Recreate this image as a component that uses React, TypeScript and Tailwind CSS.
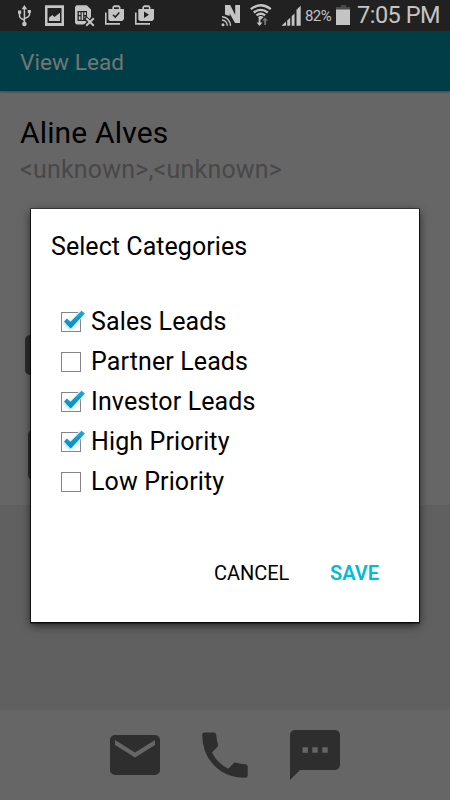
import React from "react";

const categories = [
  { name: "Sales Leads", checked: true },
  { name: "Partner Leads", checked: false },
  { name: "Investor Leads", checked: true },
  { name: "High Priority", checked: true },
  { name: "Low Priority", checked: false },
];

function StatusLeft() {
  return (
    <svg width="170" height="31" viewBox="0 0 170 31" fill="#c4c4c4">
      <g stroke="#c4c4c4" strokeWidth="1.5" fill="none">
        <path d="M24.4 8V23M19.5 13v3q0 2 5 4.200M29.500 12v2.500q0 2.200-5 4" />
      </g>
      <path d="M24.400 5l2.800 4.300h-5.600zM18 10.500h3.200v3.200H18zM27.700 10h3.200v3h-3.200z" />
      <circle cx="24.400" cy="24" r="2.300" />
      <path fillRule="evenodd" d="M45 5.200h19V26H45zM47.500 8v15h14V8z" />
      <path d="M49 21v-3.200l3.200-2.700 2.300 1.800 5.500-4.200V21z" />
      <path d="M76.500 5.300h10.200L91 9.500V17l-4 6-3 1.500h-7.500L75 23V7z" />
      <path d="M77.500 11h9.500v10h-9.500z" fill="#212121" />
      <path d="M78.800 12.300h1.700v2.600h-1.700zM81.600 12.300h1.600V20h-1.600zM84.300 12.300H86v2.600h-1.700zM78.800 16.300h1.700v3.500h-1.700zM84.300 16.500H86V20h-1.700z" />
      <path d="M85 17.500l9 9M94 17.500l-9 9" stroke="#212121" strokeWidth="4" />
      <path d="M86.200 18.200l7.600 7.600M93.800 18.200l-7.600 7.600" stroke="#c4c4c4" strokeWidth="2" />
      {[0, 30].map((x) => (
        <g key={x} transform={`translate(${x} 0)`}>
          <path d="M105 12.500h1.600V23H120v1.700h-15z" />
          <path fillRule="evenodd" d="M108.300 9h4V7l1.700-1.700h5L120.500 7v2h3.500v10l-1.700 2h-12.500l-1.500-1.500zM114 9h4.800V7.200H114z" />
        </g>
      ))}
      <path d="M113 14.800l2.300 2.300 4-4.500" fill="none" stroke="#212121" strokeWidth="1.500" />
      <path d="M144 11.500v6.400l5-3.200z" fill="#212121" />
    </svg>
  );
}

function StatusSignals() {
  return (
    <svg width="82" height="31" viewBox="221 0 82 31" className="shrink-0" fill="#c4c4c4">
      <path d="M225 5h5.200l5 10V5h4.800v18h-5l-5.300-9.500V16l-4.700-1.500z" />
      <g fill="none" stroke="#c4c4c4" strokeWidth="1.500">
        <path d="M222 16.700a9 9 0 0 1 8.500 9M222 20a5.700 5.700 0 0 1 5.300 5.700" />
      </g>
      <circle cx="223" cy="24.800" r="1.500" />
      <g fill="none" stroke="#c4c4c4" strokeWidth="2.300">
        <path d="M250.800 9.200q10-7.800 20 0M253.800 12.500q7-5.300 14 0" />
        <path d="M256.500 15.300q4.300-3.200 8.600 0" />
      </g>
      <path d="M258 17q2.800-2 5.600 0l-2.800 2.700z" />
      <path d="M258.700 17.500h1.700v5h2l-2.900 3.600-2.800-3.600h2z" />
      <path d="M264.200 25v-4.200h-2l2.900-3.300 2.900 3.300h-2V25z" fill="#757575" />
      <path d="M281.500 25.800l4.500-4.300v4.300zM287.200 20.500l3-2.700v8h-3zM291.700 16.200l2.800-2.700v12.300h-2.800zM296.500 9.800l4.200-4v20h-4.200z" />
    </svg>
  );
}

function Checkbox({ checked }: { checked: boolean }) {
  return (
    <svg width="26" height="26" viewBox="0 0 26 26" className="mt-[2px] shrink-0">
      <defs>
        <filter id="glow" x="-40%" y="-40%" width="180%" height="180%">
          <feGaussianBlur stdDeviation="1.400" />
        </filter>
        <linearGradient id="tick" x1="0" y1="0" x2="0" y2="1">
          <stop offset="0" stopColor="#23a6d5" />
          <stop offset="1" stopColor="#078bbd" />
        </linearGradient>
      </defs>
      <rect x="1.500" y="3.500" width="19" height="19" fill="#fff" stroke="#858585" />
      {checked && (
        <>
          <path d="M18 2h5v8h-3z" fill="#fff" />
          <path d="M5 12.500l5.300 5L22.300 4" fill="none" stroke="#a5def5" strokeWidth="5" filter="url(#glow)" />
          <path d="M4 12.600l2.900-3 3.600 3.200L21.500 1.800l3.400 2.800L10.700 19.600z" fill="url(#tick)" />
        </>
      )}
    </svg>
  );
}

export default function App() {
  return (
    <div className="relative flex h-[800px] w-[450px] flex-col overflow-hidden bg-[#666] font-['Roboto',sans-serif]">
      <div className="flex h-[31px] shrink-0 items-center bg-[#212121] text-[#c4c4c4]">
        <StatusLeft />
        <div className="ml-[51px] flex items-center">
          <StatusSignals />
          <span className="ml-[2px] w-[30px] whitespace-nowrap pt-[2px] text-[15px] leading-[29px] tracking-[-0.6px]">82%</span>
          <svg width="16" height="31" viewBox="0 0 16 31" className="shrink-0">
            <path d="M6 5h5v2h4v3H1V7h5z" fill="#4b4b4b" />
            <path d="M1 9.500h14V25H1z" fill="#c4c4c4" />
          </svg>
          <span className="ml-[6px] whitespace-nowrap text-[23.500px] leading-[31px] tracking-[-0.5px]">7:05 PM</span>
        </div>
      </div>
      <header className="z-0 flex h-[60px] shrink-0 items-center bg-[#003e47] pl-5 pt-[3px] text-[22.500px] text-[#757575] shadow-[0_1px_2px_rgba(0,0,0,0.35)]">
        <h1 className="tracking-[0.1px]">View Lead</h1>
      </header>
      <main className="flex h-[414px] shrink-0 flex-col items-start pl-5 pt-[27px]">
        <h2 className="text-[30px] leading-[30px] tracking-[0.150px] text-black">Aline Alves</h2>
        <p className="mt-[7px] text-[25px] leading-[30px] tracking-[0.200px] text-[#484848]">&lt;unknown&gt;,&lt;unknown&gt;</p>
        <div className="ml-[5px] mt-[150px] h-10 w-10 rounded-[5px] bg-[#2d2d2d]" />
        <div className="ml-2 mt-[55px] h-[50px] w-10 rounded-[5px] bg-[#2d2d2d]" />
      </main>
      <section className="h-[205px] shrink-0 bg-[#606060]" />
      <footer className="h-[90px] shrink-0">
        <svg width="450" height="90" viewBox="0 710 450 90" fill="#2e2e2e">
          <path fillRule="evenodd" d="M115 735h40a5 5 0 0 1 5 5v30a5 5 0 0 1-5 5h-40a5 5 0 0 1-5-5v-30a5 5 0 0 1 5-5zM115 740v5l20 12.500 20-12.500v-5l-20 12.500z" />
          <path d="M204.500 732.500h9.200q2.300 0 2.600 2.400.3 5.500 1.600 9.400.5 1.700-.8 3l-5.200 5.100q5.500 11 16.400 16.400l5.100-5.300q1.300-1.300 3-.8 4.200 1.400 9 1.500 2.300.1 2.300 2.500v8.800q0 2.200-2.500 2.200-19.200 0-31-12.200-12-12-12-30.800.1-2.200 2.300-2.200z" />
          <path fillRule="evenodd" d="M295 730h40a5 5 0 0 1 5 5v30a5 5 0 0 1-5 5h-35l-10 10v-45a5 5 0 0 1 5-5zM302.500 747.200v5.600h5.400v-5.600zM312.300 747.200v5.600h5.400v-5.600zM322.300 747.200v5.600h5.400v-5.600z" />
        </svg>
      </footer>

      <div role="dialog" className="absolute left-[31px] top-[209px] flex h-[413px] w-[388px] flex-col bg-white text-black shadow-[0_0.500px_0_1px_rgba(0,0,0,0.75),0_3px_9px_rgba(0,0,0,0.7)]">
        <h2 className="pl-[20px] pt-[23px] text-[25px] leading-[30px] tracking-[0.060px]">Select Categories</h2>
        <ul className="mt-[39px] pl-[29px]">
          {categories.map((c) => (
            <li key={c.name} className="flex h-10 items-center">
              <Checkbox checked={c.checked} />
              <span className="ml-[5px] pt-[2px] text-[25px] leading-[38px] tracking-[0.120px]">{c.name}</span>
            </li>
          ))}
        </ul>
        <div className="mt-[57px] flex justify-end pr-10 text-[20px] leading-[30px]">
          <button className="w-[116px] text-left tracking-[-0.050px]">CANCEL</button>
          <button className="w-[49px] text-left font-semibold text-[#00bcd4]">SAVE</button>
        </div>
      </div>
    </div>
  );
}
